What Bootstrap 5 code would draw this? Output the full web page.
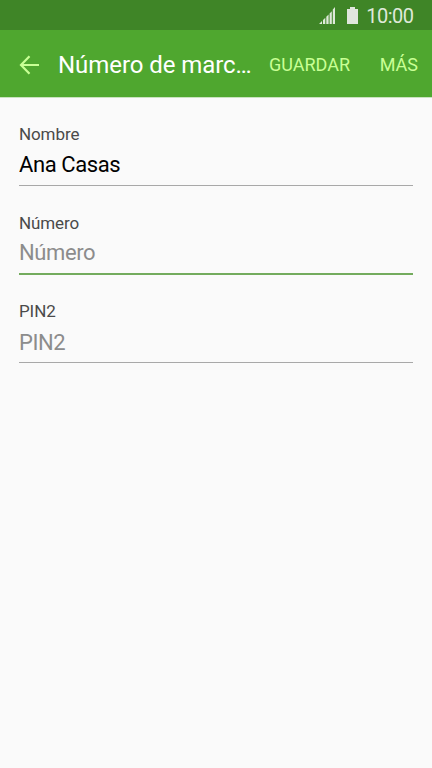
<!DOCTYPE html>
<html lang="es">
<head>
    <meta charset="UTF-8">
    <meta name="viewport" content="width=device-width, initial-scale=1.0">
    <title>Número de marcación fija</title>
    <link rel="stylesheet" href="https://cdn.jsdelivr.net/npm/bootstrap@5.3.2/dist/css/bootstrap.min.css">
    <style>
        body {
            min-height: 100vh;
            background-color: #fafafa;
            color: #000;
            font-family: Roboto, sans-serif;
        }
        .status-bar {
            height: 30px;
            padding-right: 18.5px;
            background-color: #3f8527;
            color: #dfe9da;
            font-size: 20px;
            line-height: 30px;
            letter-spacing: -.5px;
        }
        .status-bar span {
            padding-top: 2px;
        }
        .signal-icon {
            margin-right: 12px;
        }
        .battery-icon {
            margin-right: 8px;
        }
        .app-bar {
            height: 67px;
            padding: 2px 14px 0 19px;
            background-color: #4fa72f;
            box-shadow: 0 1px 0 #c9e3bf;
        }
        .app-title {
            width: 196px;
            margin-left: 18px;
            color: #fff;
            font-size: 24px;
            line-height: 32px;
            letter-spacing: -.06px;
        }
        .action {
            color: #c9ff95;
            font-size: 18px;
            line-height: 24px;
        }
        .save {
            margin-left: 15px;
        }
        .entry-form {
            padding: 25px 19px;
        }
        .field {
            height: 88.6px;
        }
        .field label {
            display: block;
            color: #4a4a4a;
            font-size: 17px;
            line-height: 24px;
            letter-spacing: -.1px;
        }
        .field .form-control {
            height: 40px;
            padding: 1.4px 0 2.6px;
            background-color: transparent;
            border-bottom: 1px solid #a8a8a8;
            color: #000;
            font-size: 22px;
            line-height: 36px;
            letter-spacing: -.4px;
        }
        .field .form-control::placeholder {
            color: #8c8c8c;
        }
        .field .form-control.active {
            border-bottom: 2px solid #73ab5d;
        }
    </style>
</head>
<body>
    <div class="status-bar d-flex align-items-center justify-content-end">
        <svg class="signal-icon" width="16" height="17" viewBox="0 0 16 17" fill="#dfe9da">
            <path d="M0 17l3-3v3zM4 13l2.300-2.300V17H4zM7.300 9.700L9.600 7.400V17H7.300zM10.600 6.400l2.200-2.200V17h-2.200zM13.800 2.500L16 0v17h-2.200z"/>
        </svg>
        <svg class="battery-icon" width="11" height="17" viewBox="0 0 11 17" fill="#e0e6dd">
            <path d="M3 0h5v2h3v15H0V2h3z"/>
        </svg>
        <span>10:00</span>
    </div>
    <nav class="app-bar d-flex align-items-center">
        <svg width="21" height="20" viewBox="0 0 21 20" fill="none" stroke="#c9ff95" stroke-width="2.2">
            <path d="M20 10H2M10.500 1.200L2 10l8.500 8.800"/>
        </svg>
        <div class="app-title text-nowrap">Número de marc…</div>
        <div class="action save">GUARDAR</div>
        <div class="action ms-auto">MÁS</div>
    </nav>
    <form class="entry-form">
        <div class="field">
            <label for="name">Nombre</label>
            <input id="name" type="text" class="form-control border-top-0 border-start-0 border-end-0 rounded-0" value="Ana Casas">
        </div>
        <div class="field">
            <label for="number">Número</label>
            <input id="number" type="text" class="form-control active border-top-0 border-start-0 border-end-0 rounded-0" placeholder="Número">
        </div>
        <div class="field">
            <label for="pin2">PIN2</label>
            <input id="pin2" type="text" class="form-control border-top-0 border-start-0 border-end-0 rounded-0" placeholder="PIN2">
        </div>
    </form>
    <script src="https://cdn.jsdelivr.net/npm/bootstrap@5.3.2/dist/js/bootstrap.bundle.min.js"></script>
</body>
</html>
